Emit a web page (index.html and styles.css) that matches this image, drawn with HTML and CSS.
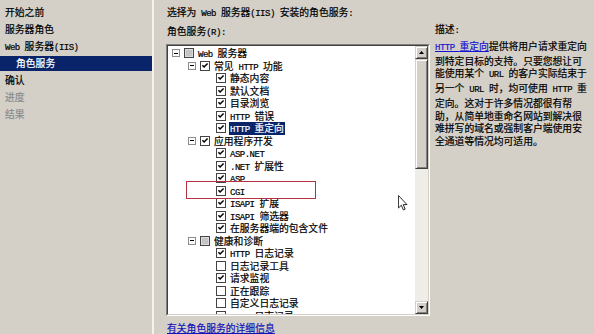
FILE: index.html
```html
<!DOCTYPE html>
<html lang="zh-CN">
<head>
<meta charset="utf-8">
<title>角色服务</title>
<link rel="stylesheet" href="styles.css">
</head>
<body>
<svg class="defs" width="0" height="0" aria-hidden="true">
  <defs>
    <symbol id="ck" viewBox="0 0 9 9"><path d="M1.6 3.6 L3.5 5.6 L7.4 1.6" fill="none" stroke="#000" stroke-width="1.7"/></symbol>
  </defs>
</svg>
<div class="page">
  <nav class="sidebar">
    <div class="step">开始之前</div>
    <div class="step">服务器角色</div>
    <div class="step"><span class="lat">Web </span>服务器<span class="lat">(IIS)</span></div>
    <div class="step sub active">角色服务</div>
    <div class="step">确认</div>
    <div class="step dim">进度</div>
    <div class="step dim">结果</div>
  </nav>
  <main class="main">
    <div class="title">选择为<span class="lat"> Web </span>服务器<span class="lat">(IIS) </span>安装的角色服务<span class="lat">:</span></div>
    <div class="content">
      <div class="leftcol">
        <div class="label">角色服务<span class="lat">(R):</span></div>
        <div class="listbox">
          <div class="listbox-in">
            <div class="tree">
              <div class="row l0"><span class="exp"></span><span class="cb part"></span><span class="txt"><span class="lat">Web </span>服务器</span></div>
              <div class="row l1"><span class="exp"></span><span class="cb"><svg><use href="#ck"/></svg></span><span class="txt">常见<span class="lat"> HTTP </span>功能</span></div>
              <div class="row l2"><span class="cb"><svg><use href="#ck"/></svg></span><span class="txt">静态内容</span></div>
              <div class="row l2"><span class="cb"><svg><use href="#ck"/></svg></span><span class="txt">默认文档</span></div>
              <div class="row l2"><span class="cb"><svg><use href="#ck"/></svg></span><span class="txt">目录浏览</span></div>
              <div class="row l2"><span class="cb"><svg><use href="#ck"/></svg></span><span class="txt"><span class="lat">HTTP </span>错误</span></div>
              <div class="row l2"><span class="cb"><svg><use href="#ck"/></svg></span><span class="txt sel"><span class="lat">HTTP </span>重定向</span></div>
              <div class="row l1"><span class="exp"></span><span class="cb"><svg><use href="#ck"/></svg></span><span class="txt">应用程序开发</span></div>
              <div class="row l2"><span class="cb"><svg><use href="#ck"/></svg></span><span class="txt"><span class="lat">ASP.NET</span></span></div>
              <div class="row l2"><span class="cb"><svg><use href="#ck"/></svg></span><span class="txt"><span class="lat">.NET </span>扩展性</span></div>
              <div class="row l2"><span class="cb"><svg><use href="#ck"/></svg></span><span class="txt"><span class="lat">ASP</span></span></div>
              <div class="row l2"><span class="cb"><svg><use href="#ck"/></svg></span><span class="txt"><span class="lat">CGI</span></span></div>
              <div class="row l2"><span class="cb"><svg><use href="#ck"/></svg></span><span class="txt"><span class="lat">ISAPI </span>扩展</span></div>
              <div class="row l2"><span class="cb"><svg><use href="#ck"/></svg></span><span class="txt"><span class="lat">ISAPI </span>筛选器</span></div>
              <div class="row l2"><span class="cb"><svg><use href="#ck"/></svg></span><span class="txt">在服务器端的包含文件</span></div>
              <div class="row l1"><span class="exp"></span><span class="cb part"></span><span class="txt">健康和诊断</span></div>
              <div class="row l2"><span class="cb"><svg><use href="#ck"/></svg></span><span class="txt"><span class="lat">HTTP </span>日志记录</span></div>
              <div class="row l2"><span class="cb"></span><span class="txt">日志记录工具</span></div>
              <div class="row l2"><span class="cb"><svg><use href="#ck"/></svg></span><span class="txt">请求监视</span></div>
              <div class="row l2"><span class="cb"></span><span class="txt">正在跟踪</span></div>
              <div class="row l2"><span class="cb"></span><span class="txt">自定义日志记录</span></div>
              <div class="row l2"><span class="cb"></span><span class="txt"><span class="lat">ODBC </span>日志记录</span></div>
            </div>
            <div class="scrollbar">
              <div class="sbtn"><svg width="5" height="3" viewBox="0 0 5 3"><path d="M0 3 L2.5 0 L5 3 Z" fill="#000"/></svg></div>
              <div class="thumb"></div>
              <div class="track"></div>
              <div class="sbtn"><svg width="5" height="3" viewBox="0 0 5 3"><path d="M0 0 L5 0 L2.5 3 Z" fill="#000"/></svg></div>
            </div>
            <div class="mark"></div>
          </div>
        </div>
        <a class="more" href="#">有关角色服务的详细信息</a>
      </div>
      <div class="desc">
        <div class="desc-h">描述<span class="lat">:</span></div>
        <p class="desc-p">
          <span class="ln"><a class="dlink" href="#"><span class="lat">HTTP </span>重定向</a>提供将用户请求重定向</span>
          <span class="ln">到特定目标的支持。只要您想让可</span>
          <span class="ln">能使用某个<span class="lat"> URL </span>的客户实际结束于</span>
          <span class="ln">另一个<span class="lat"> URL </span>时，均可使用<span class="lat"> HTTP </span>重</span>
          <span class="ln">定向。这对于许多情况都很有帮</span>
          <span class="ln">助，从简单地重命名网站到解决很</span>
          <span class="ln">难拼写的域名或强制客户端使用安</span>
          <span class="ln">全通道等情况均可适用。</span>
        </p>
      </div>
    </div>
  </main>
  <svg class="cursor" width="10" height="16" viewBox="0 0 12 19"><path d="M0.5 0.5 V15.5 L4 12.2 L6.4 17.8 L8.6 16.9 L6.3 11.4 H10.8 Z" fill="#fff" stroke="#000" stroke-width="1"/></svg>
</div>
</body>
</html>
```
FILE: styles.css
```css
* { box-sizing: border-box; }
html, body { margin: 0; padding: 0; }
body {
  width: 594px;
  height: 334px;
  overflow: hidden;
  background: #d4d0c8;
  font-family: "Noto Sans CJK SC", sans-serif;
  font-size: 9.8px;
  color: #000;
  -webkit-text-stroke: 0.2px currentColor;
}
.defs { position: absolute; width: 0; height: 0; }
.lat {
  font-family: "Liberation Mono", monospace;
  font-size: 9px;
  letter-spacing: -0.5px;
}
.page {
  position: relative;
  display: flex;
  width: 594px;
  height: 334px;
}
.sidebar {
  width: 154px;
  flex: none;
  padding-top: 4px;
  border-right: 2px solid #f4f3ef;
}
.step {
  height: 17px;
  line-height: 17px;
  padding-left: 5px;
  white-space: nowrap;
}
.step.sub { padding-left: 16px; }
.step.active {
  background: #0a246a;
  color: #fff;
  height: 15px;
  line-height: 15px;
  margin: 1px 0;
}
.step.dim { color: #8a8a8a; }

.main {
  flex: 1;
  padding: 6px 0 0 12px;
  display: flex;
  flex-direction: column;
}
.title {
  line-height: 13px;
  padding-left: 1px;
  white-space: nowrap;
}
.content {
  display: flex;
  gap: 5px;
  align-items: flex-start;
}
.leftcol {
  width: 264px;
  flex: none;
  display: flex;
  flex-direction: column;
}
.label {
  margin-top: 4px;
  line-height: 13px;
  padding-left: 1px;
}
.listbox {
  margin-top: 4px;
  height: 272px;
  border: 1px solid;
  border-color: #808080 #ffffff #ffffff #808080;
}
.listbox-in {
  position: relative;
  height: 100%;
  display: flex;
  border: 1px solid;
  border-color: #404040 #d4d0c8 #d4d0c8 #404040;
}
.tree {
  flex: 1;
  background: #fff;
  overflow: hidden;
  padding-top: 1px;
}
.row {
  height: 12.5px;
  display: flex;
  align-items: center;
  white-space: nowrap;
}
.row.l0 { padding-left: 4px; }
.row.l1 { padding-left: 20px; }
.row.l2 { padding-left: 48px; }
.exp {
  width: 8px;
  height: 8px;
  border: 1px solid #8c8c8c;
  background: #fff;
  margin-right: 4px;
  display: flex;
  align-items: center;
  justify-content: center;
  flex: none;
}
.exp::after {
  content: "";
  width: 4px;
  height: 1px;
  background: #000;
}
.cb {
  width: 10px;
  height: 10px;
  border: 1px solid #444;
  background: #fff;
  margin-right: 4px;
  flex: none;
  display: flex;
  align-items: center;
  justify-content: center;
}
.cb svg { width: 8px; height: 8px; }
.cb.part {
  background: #c4c4c4;
  box-shadow: inset 0 0 0 1px #dcdcdc;
}
.txt {
  line-height: 12.5px;
  height: 12.5px;
}
.txt.sel {
  background: #0a246a;
  color: #fff;
  padding: 0 1px;
  margin-left: -1px;
}
.mark {
  position: absolute;
  left: 18px;
  top: 135px;
  width: 130px;
  height: 18px;
  border: 1px solid #b4313f;
}
.scrollbar {
  width: 13px;
  flex: none;
  display: flex;
  flex-direction: column;
}
.sbtn, .thumb {
  background: #d4d0c8;
  border: 1px solid;
  border-color: #d4d0c8 #404040 #404040 #d4d0c8;
  box-shadow: inset 1px 1px 0 #fff, inset -1px -1px 0 #808080;
}
.sbtn {
  height: 13px;
  display: flex;
  align-items: center;
  justify-content: center;
}
.thumb { height: 110px; }
.track {
  flex: 1;
  background: #eeede8;
}
.more {
  margin-top: 6px;
  line-height: 13px;
  padding-left: 1px;
  color: #1414b8;
  text-decoration: underline;
  white-space: nowrap;
}
.desc {
  flex: 1;
}
.desc-h {
  margin-top: 2px;
  line-height: 13px;
}
.desc-p {
  margin: 2px 0 0;
}
.ln {
  display: block;
  line-height: 12.7px;
  white-space: nowrap;
}
.dlink {
  color: #1414d0;
  text-decoration: underline;
}
.cursor {
  position: absolute;
  left: 398px;
  top: 195px;
}
```
